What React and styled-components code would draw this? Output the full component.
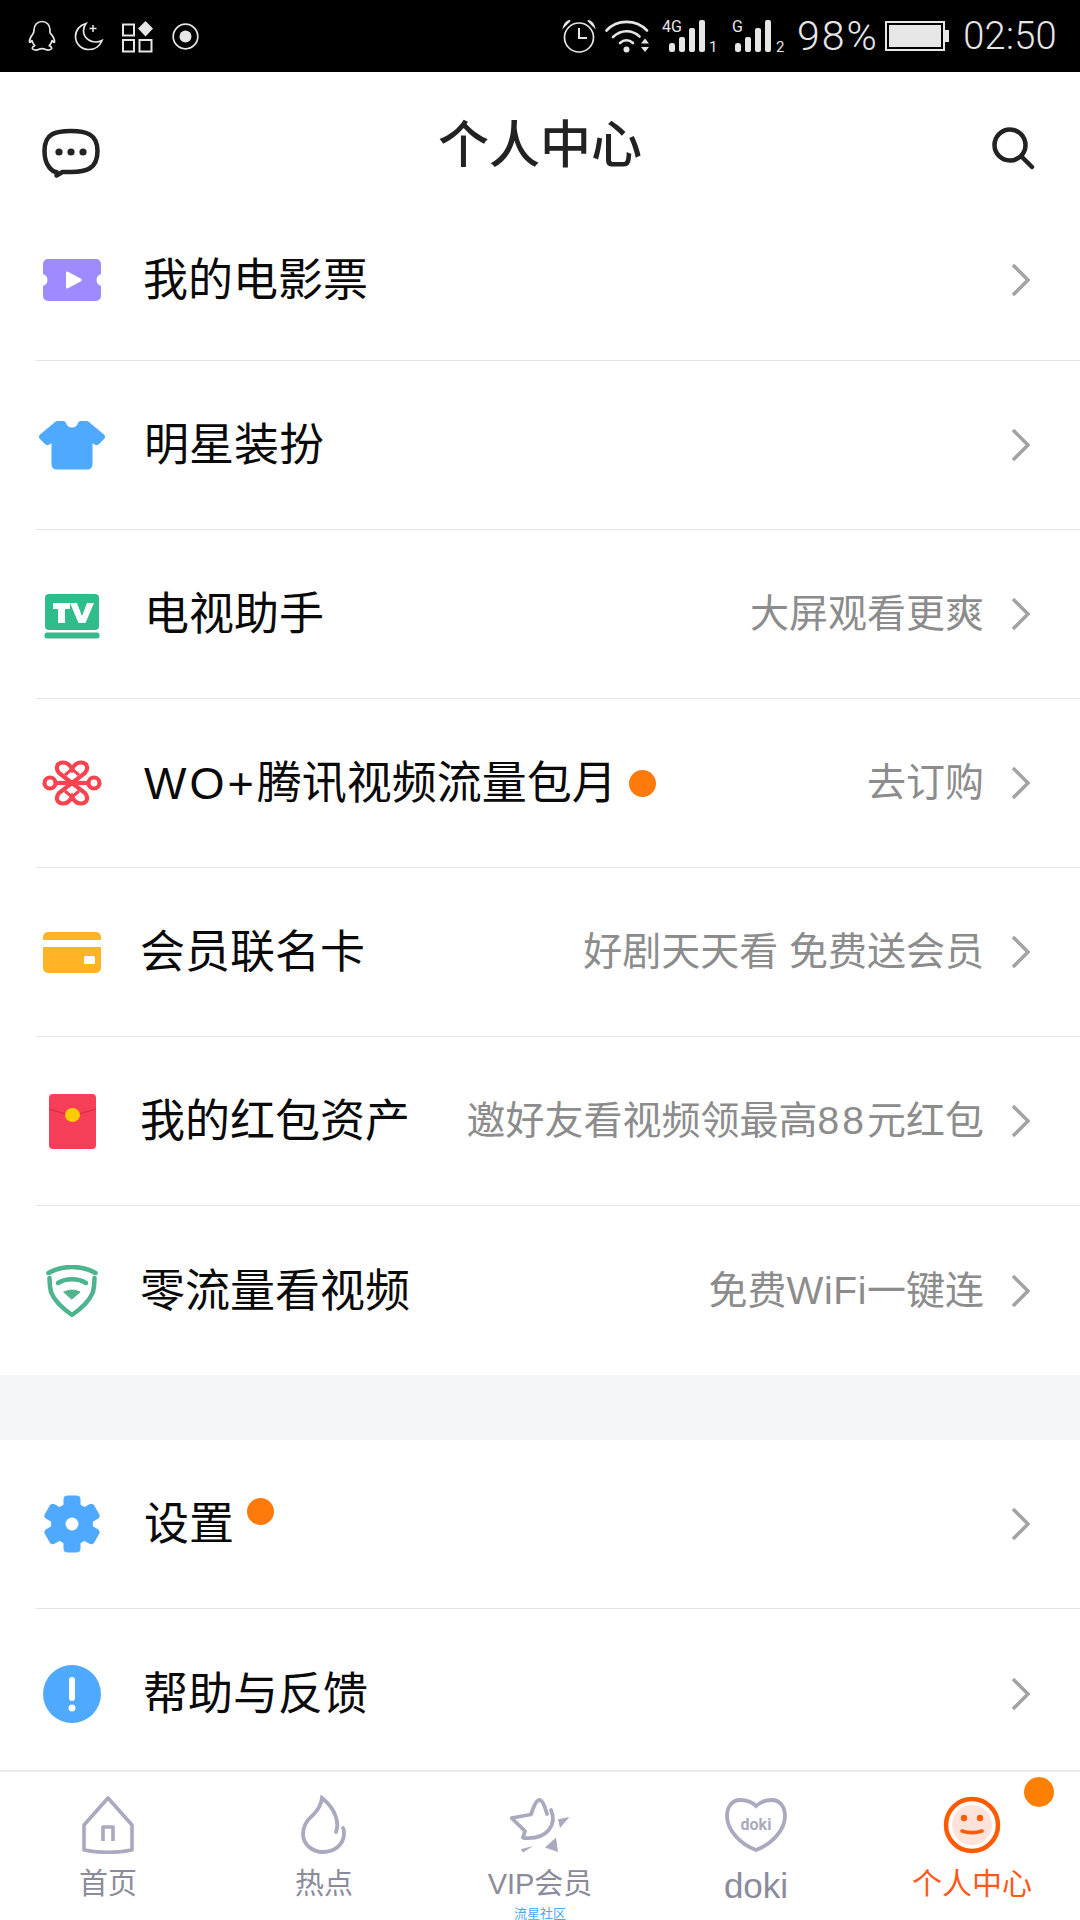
import React from 'react';
import styled, { createGlobalStyle } from 'styled-components';

const GlobalStyle = createGlobalStyle`
  html, body {
    margin: 0;
    padding: 0;
    background: #fff;
  }
  * {
    box-sizing: border-box;
  }
`;

const Page = styled.div`
  width: 1080px;
  height: 1920px;
  display: flex;
  flex-direction: column;
  overflow: hidden;
  background: #fff;
  font-family: "Liberation Sans", "Noto Sans CJK SC", sans-serif;
`;

// 状态栏
const StatusBar = styled.div`
  flex: none;
  height: 72px;
  background: #000;
  color: #e6e6e6;
  display: flex;
  align-items: center;
  justify-content: space-between;
  padding: 0 23px 0 28px;
`;

const StatusGroup = styled.div`
  display: flex;
  align-items: center;
  gap: ${(p) => p.$gap}px;
`;

const StatusSlot = styled.div`
  display: flex;
  margin-left: ${(p) => p.$left}px;
`;

const Percent = styled.span`
  font-family: Roboto, sans-serif;
  font-size: 41px;
  font-weight: 300;
  line-height: 72px;
  letter-spacing: 2px;
  margin-left: 3px;
  margin-right: -2.5px;
`;

const Clock = styled.span`
  font-family: Roboto, sans-serif;
  font-size: 38px;
  font-weight: 300;
  line-height: 72px;
  letter-spacing: 0.3px;
  margin-left: 5px;
`;

// 顶部标题
const Header = styled.div`
  flex: none;
  height: 127px;
  display: grid;
  grid-template-columns: 1fr auto 1fr;
  align-items: center;
  padding: 20px 42px 0 42px;
`;

const HeaderAction = styled.div`
  display: flex;
  justify-content: ${(p) => (p.$end ? 'flex-end' : 'flex-start')};
  margin-top: ${(p) => p.$top}px;
`;

const Title = styled.h1`
  margin: 0;
  font-size: 51px;
  font-weight: 500;
  color: #222;
  line-height: 60px;
`;

const Main = styled.div`
  flex: 1;
  min-height: 0;
  overflow: hidden;
`;

const Row = styled.div`
  height: ${(p) => (p.$first ? 162 : 169)}px;
  margin-left: 36px;
  padding-right: 50px;
  display: flex;
  align-items: center;
  border-bottom: ${(p) => (p.$last ? 'none' : '1px solid #e4e4e4')};
`;

const IconSlot = styled.div`
  flex: none;
  width: 72px;
  margin-right: 35px;
  margin-top: ${(p) => p.$shift || 0}px;
  display: flex;
  align-items: center;
  justify-content: center;
`;

const RowLabel = styled.span`
  font-size: 45px;
  line-height: 60px;
  color: #0a0a0a;
  margin-left: ${(p) => p.$nudge || 0}px;
  margin-top: 2px;
  white-space: nowrap;
`;

const LatinPart = styled.span`
  letter-spacing: ${(p) => p.$spacing}px;
`;

const Dot = styled.span`
  flex: none;
  width: 27px;
  height: 27px;
  border-radius: 50%;
  background: #ff7a0a;
  margin-left: ${(p) => p.$gap}px;
  margin-bottom: ${(p) => p.$lift || 0}px;
`;

const Spacer = styled.span`
  flex: 1;
`;

const RowHint = styled.span`
  font-size: 39px;
  line-height: 60px;
  color: #8c8c8c;
  white-space: nowrap;
`;

const Chevron = styled.svg`
  flex: none;
  margin-left: 26px;
`;

const SectionGap = styled.div`
  height: 65px;
  background: #f4f5f7;
`;

// 底部导航
const TabBar = styled.div`
  flex: none;
  height: 150px;
  border-top: 2px solid #ebebeb;
  background: #fff;
  display: grid;
  grid-template-columns: repeat(5, 1fr);
`;

const Tab = styled.div`
  display: flex;
  flex-direction: column;
  align-items: center;
  padding-top: 21px;
  position: relative;
`;

const TabIcon = styled.div`
  height: 64px;
  display: flex;
  align-items: center;
  justify-content: center;
`;

const TabLabel = styled.span`
  font-size: ${(p) => p.$size || 29}px;
  line-height: 36px;
  margin-top: ${(p) => p.$top || 9}px;
  color: ${(p) => (p.$active ? '#ff5a1c' : '#8b8b9c')};
  white-space: nowrap;
`;

const TabCaption = styled.span`
  position: absolute;
  left: 0;
  right: 0;
  bottom: 0;
  text-align: center;
  font-size: 13px;
  line-height: 13px;
  color: #4aa8ff;
`;

const TabBadge = styled.span`
  position: absolute;
  top: 5px;
  left: 160px;
  width: 30px;
  height: 30px;
  border-radius: 50%;
  background: #ff8000;
`;

const QQIcon = () => (
  <svg width="28" height="32" viewBox="0 0 28 32" fill="none" stroke="#e6e6e6" strokeWidth="1.7" strokeLinejoin="round">
    <path d="M14 1.5c-5 0-8 3.800-8 8.500 0 2-.3 3-1.500 4.600C2.600 17.200 1 20 1.600 22.300c.8 0 1.600-.7 2.400-1.700.5 2 1.300 3.700 2.700 5-1.600.7-2.700 1.600-2.300 3 .5 1.600 4.200 1.800 6 .9 1.200-.6 2.200-.9 3.600-.9s2.400.3 3.600.9c1.800.9 5.500.7 6-.9.4-1.400-.7-2.300-2.300-3 1.400-1.300 2.200-3 2.700-5 .8 1 1.600 1.700 2.400 1.700.6-2.300-1-5.100-2.900-7.700C21.300 13 22 12 22 10c0-4.700-3-8.500-8-8.500z" />
  </svg>
);

const MoonIcon = () => (
  <svg width="30" height="30" viewBox="0 0 30 30" fill="none" stroke="#e6e6e6" strokeWidth="1.7">
    <path d="M12 2.500C6 4 1.500 9 1.500 15.500 1.500 23 7.500 28.500 15 28.500c6 0 11-3.700 13-9-2 1-3.800 1.500-6 1.500-7.500 0-12.500-5-12.500-11.500 0-2.500 1-5 2.500-7z" />
    <path d="M19 4v7M15.500 7.500h7" strokeWidth="1.500" />
  </svg>
);

const AppsIcon = () => (
  <svg width="32" height="33" viewBox="0 0 32 33" fill="none" stroke="#e6e6e6" strokeWidth="2">
    <rect x="1" y="4.500" width="11" height="11" />
    <rect x="1" y="20" width="11" height="11.500" />
    <rect x="17.500" y="20" width="12" height="11.500" />
    <path d="M23.500 1L31 8.500 23.500 16.500 16 8.500z" fill="#e6e6e6" stroke="none" />
  </svg>
);

const RecordIcon = () => (
  <svg width="27" height="27" viewBox="0 0 27 27">
    <circle cx="13.500" cy="13.500" r="12.300" fill="none" stroke="#e6e6e6" strokeWidth="1.700" />
    <circle cx="13.500" cy="13.500" r="6" fill="#e6e6e6" />
  </svg>
);

const AlarmIcon = () => (
  <svg width="34" height="34" viewBox="0 0 34 34" fill="none" stroke="#e6e6e6" strokeWidth="1.700">
    <circle cx="17" cy="18.500" r="14.500" />
    <path d="M17 9v10h8" strokeWidth="2" />
    <path d="M2 7.500C3 4 5 2.500 8 1.500L2 7.500zM32 7.500C31 4 29 2.500 26 1.500l6 6z" fill="#e6e6e6" />
  </svg>
);

const WifiIcon = () => (
  <svg width="45" height="34" viewBox="0 0 45 34" fill="none" stroke="#e6e6e6" strokeWidth="2.600" strokeLinecap="round">
    <path d="M1.500 11.500C12 0 31 0 42 11.500" />
    <path d="M8 18c8-7.500 19-7.500 26.500-.5" />
    <path d="M15 24c4-3.500 9-3.500 13 0" />
    <circle cx="21.500" cy="30.500" r="3" fill="#e6e6e6" stroke="none" />
    <path d="M36 24.500h8l-4-5zM36 28h8l-4 5z" fill="#e6e6e6" stroke="none" />
  </svg>
);

const SignalIcon = ({ tag, sim, barX, simX, width }) => (
  <svg width={width} height="46" viewBox={`0 -7 ${width} 46`} fill="#e6e6e6">
    <text x="0" y="12" fontSize="16" fontFamily="Roboto, sans-serif">{tag}</text>
    <rect x={barX} y="23" width="6" height="9" rx="2.500" />
    <rect x={barX + 10} y="17" width="6" height="15" rx="2" />
    <rect x={barX + 20} y="8" width="6" height="24" rx="2" />
    <rect x={barX + 30} y="0" width="6" height="32" rx="2" />
    <text x={simX} y="32" fontSize="15" fontFamily="Roboto, sans-serif">{sim}</text>
  </svg>
);

const BatteryIcon = () => (
  <svg width="64" height="30" viewBox="0 0 64 30">
    <rect x="1" y="1" width="58" height="28" fill="none" stroke="#e6e6e6" strokeWidth="2" />
    <rect x="4" y="4" width="52" height="22" fill="#e6e6e6" />
    <rect x="60" y="9" width="4" height="12" fill="#e6e6e6" />
  </svg>
);

const MessageIcon = () => (
  <svg width="58" height="50" viewBox="0 0 58 50" fill="none">
    <path d="M29 3C14 3 2.500 5 2.500 23c0 16 9 21 12 21v3.500l6-3.500H29c15 0 26.500-3 26.500-21C55.500 6 44 3 29 3z" stroke="#222" strokeWidth="4.500" strokeLinejoin="round" />
    <path d="M15 43.500v4.500l6-3.500z" fill="#222" />
    <circle cx="17" cy="24" r="3.600" fill="#222" />
    <circle cx="29" cy="24" r="3.600" fill="#222" />
    <circle cx="41" cy="24" r="3.600" fill="#222" />
  </svg>
);

const SearchIcon = () => (
  <svg width="47" height="44" viewBox="0 0 47 44" fill="none" stroke="#222" strokeWidth="4.500" strokeLinecap="round">
    <circle cx="19" cy="19" r="15.500" />
    <path d="M31 31l10 10" />
  </svg>
);

const TicketIcon = () => (
  <svg width="58" height="42" viewBox="0 0 58 42">
    <path d="M5 0h48a5 5 0 0 1 5 5v10c-3 1-4.500 3-4.500 6s1.500 5 4.500 6v10a5 5 0 0 1-5 5H5a5 5 0 0 1-5-5V27c3-1 4.500-3 4.500-6S3 16 0 15V5a5 5 0 0 1 5-5z" fill="#9f8aff" />
    <path d="M23 14c0-1.200 1-2 2-1.300l13 7c1 .6 1 2 0 2.600l-13 7c-1 .7-2-.1-2-1.300z" fill="#fff" />
  </svg>
);

const ShirtIcon = () => (
  <svg width="68" height="50" viewBox="0 0 68 50">
    <path d="M20 1h5c2 0 2.500 1 3 2 1 3 3 4.500 6 4.500s5-1.500 6-4.500c.5-1 1-2 3-2h5c1.500 0 2.500.5 3.500 1.500L66 14.500c1.500 1.500 1.500 3 0 4.500l-5 5c-1.500 1.500-3 1.500-4.500.5L54.500 23v21c0 3.500-2 5.500-5.500 5.500H19c-3.500 0-5.500-2-5.500-5.500V23l-2 1.500c-1.500 1-3 1-4.500-.5l-5-5c-1.500-1.500-1.500-3 0-4.500L16.500 2.500C17.500 1.500 18.500 1 20 1z" fill="#4fa9ff" />
  </svg>
);

const TvIcon = () => (
  <svg width="56" height="45" viewBox="0 0 56 45">
    <rect x="1" y="0" width="54" height="36" rx="4" fill="#2fbd8b" />
    <rect x="0.500" y="38.500" width="55" height="6" rx="2.500" fill="#2fbd8b" />
    <path d="M9 9h17v6h-5v14h-7V15H9zM26 9h7l5 13 5-13h7l-8.500 20h-7z" fill="#fff" />
  </svg>
);

const KnotIcon = () => (
  <svg width="60" height="46" viewBox="0 0 60 46" fill="none" stroke="#f9444f" strokeWidth="4.200">
    <circle cx="8" cy="23" r="5.500" />
    <circle cx="52" cy="23" r="5.500" />
    <path d="M14 23h32" />
    <path d="M17 13c-4-5-2-10.500 4-10.500 4 0 7 2.500 9 6.500 2-4 5-6.500 9-6.500 6 0 8 5.500 4 10.500L17 33c-4 5-2 10.500 4 10.500 4 0 7-2.500 9-6.500 2 4 5 6.500 9 6.500 6 0 8-5.500 4-10.500z" />
    <path d="M30 9l7 6M30 9l-7 6M30 37l7-6M30 37l-7-6" strokeWidth="3" />
  </svg>
);

const CardIcon = () => (
  <svg width="58" height="41" viewBox="0 0 58 41">
    <path d="M5 0h48a5 5 0 0 1 5 5v3H0V5a5 5 0 0 1 5-5z" fill="#ffb426" />
    <path d="M0 15h58v21a5 5 0 0 1-5 5H5a5 5 0 0 1-5-5z" fill="#ffb426" />
    <rect x="41" y="24" width="11" height="8" rx="1.500" fill="#fff" />
  </svg>
);

const RedPacketIcon = () => (
  <svg width="47" height="55" viewBox="0 0 47 55">
    <rect x="0" y="0" width="47" height="55" rx="4" fill="#f63e58" />
    <path d="M0 15l23.500 7L47 15" fill="none" stroke="#dc3049" strokeWidth="1.500" />
    <ellipse cx="23.500" cy="21" rx="7.500" ry="7" fill="#ffcb05" />
  </svg>
);

const ShieldIcon = () => (
  <svg width="52" height="52" viewBox="0 0 52 52" fill="none" stroke="#4eb48d" strokeLinecap="round">
    <path d="M2.500 8C16 0 36 0 49.500 8" strokeWidth="4.500" />
    <path d="M3.500 13c0 6 .5 10 1.500 14C8 35 16 43 26 50c10-7 18-15 21-23 1-4 1.500-8 1.500-14" strokeWidth="4.500" />
    <path d="M12 18c8-5 20-5 28 0" strokeWidth="4.500" />
    <path d="M18 27c5-2.500 11-2.500 16 0l-8 7z" fill="#4eb48d" strokeWidth="1" />
  </svg>
);

const GearIcon = () => (
  <svg width="56" height="58" viewBox="0 0 56 58" fill="#4fa9ff">
    <circle cx="28" cy="29" r="21" />
    {[0, 60, 120, 180, 240, 300].map((deg) => (
      <rect key={deg} x="19.500" y="0.500" width="17" height="20" rx="4" transform={`rotate(${deg} 28 29)`} />
    ))}
    <circle cx="28" cy="29" r="6.500" fill="#fff" />
  </svg>
);

const HelpIcon = () => (
  <svg width="58" height="58" viewBox="0 0 58 58">
    <circle cx="29" cy="29" r="29" fill="#4fa9ff" />
    <rect x="26" y="12" width="6" height="24" rx="3" fill="#fff" />
    <circle cx="29" cy="43" r="3.500" fill="#fff" />
  </svg>
);

const HomeTabIcon = () => (
  <svg width="52" height="58" viewBox="0 0 52 58" fill="none" stroke="#a9a9bf" strokeWidth="3.600" strokeLinejoin="round">
    <path d="M26 2L2 29v25c15 3 33 3 48 0V29z" />
    <path d="M21 45V31h10v14" />
  </svg>
);

const FlameTabIcon = () => (
  <svg width="48" height="60" viewBox="0 0 48 60" fill="none" stroke="#a9a9bf" strokeWidth="3.800" strokeLinecap="round">
    <path d="M36 37c3-8 1-22-14-34-1 8-4 12-9 17-6 5-10 11-10 19 0 10 9 18 20 18s21-7 21-19c0-2 0-4-1-5" />
  </svg>
);

const StarTabIcon = () => (
  <svg width="60" height="55" viewBox="0 0 60 55" fill="none" stroke="#a9a9bf" strokeWidth="3.800" strokeLinecap="round" strokeLinejoin="round">
    <path d="M13 39.500L15 33 1.500 20 21 16.500C24 7 27 2 29.500 2 32 2 34.500 7 37 16" />
    <path d="M41 12c6 14-3 30-27 28" />
    <path d="M48 21.300L59.500 19 50 30zM35 49.600L46 39.600 48 54zM10.700 51.300L23 48 13 54.500z" fill="#a9a9bf" stroke="none" />
  </svg>
);

const DokiTabIcon = () => (
  <svg width="62" height="54" viewBox="0 0 62 54">
    <path d="M31 8C26 3 20 2 15 2 7 2 2 9 2 18c0 14 13 28 29 34 16-6 29-20 29-34C60 9 55 2 47 2c-5 0-11 1-16 6z" fill="none" stroke="#a9a9bf" strokeWidth="3.800" />
    <text x="31" y="32" textAnchor="middle" fontSize="16" fontWeight="700" fontFamily="Roboto, sans-serif" fill="#a9a9bf">doki</text>
  </svg>
);

const FaceTabIcon = () => (
  <svg width="58" height="58" viewBox="0 0 58 58" fill="none">
    <circle cx="29" cy="29" r="26" stroke="#ff5a00" strokeWidth="4.500" />
    <circle cx="29" cy="29" r="20" fill="#ffe3da" />
    <circle cx="21" cy="22" r="3.200" fill="#ff5a00" />
    <circle cx="37" cy="22" r="3.200" fill="#ff5a00" />
    <path d="M19 35c6 2 14 2 20 0" stroke="#ff5a00" strokeWidth="3.600" strokeLinecap="round" />
  </svg>
);

const menuTop = [
  { id: 'ticket', icon: <TicketIcon />, label: '我的电影票', nudge: 0, first: true },
  { id: 'dress', icon: <ShirtIcon />, label: '明星装扮', nudge: 1 },
  { id: 'tv', icon: <TvIcon />, label: '电视助手', hint: '大屏观看更爽', nudge: 1, shift: 5 },
  {
    id: 'wo',
    icon: <KnotIcon />,
    label: (
      <>
        <LatinPart $spacing={3}>WO+</LatinPart>腾讯视频流量包月
      </>
    ),
    hint: '去订购',
    nudge: 1,
    dot: 12,
  },
  { id: 'card', icon: <CardIcon />, label: '会员联名卡', hint: '好剧天天看 免费送会员', nudge: -3 },
  {
    id: 'packet',
    icon: <RedPacketIcon />,
    label: '我的红包资产',
    hint: (
      <>
        邀好友看视频领最高<LatinPart $spacing={3}>88</LatinPart>元红包
      </>
    ),
    nudge: -3,
  },
  {
    id: 'wifi',
    icon: <ShieldIcon />,
    label: '零流量看视频',
    hint: (
      <>
        免费<LatinPart $spacing={0.6}>WiFi</LatinPart>一键连
      </>
    ),
    nudge: -3,
    last: true,
  },
];

const menuBottom = [
  { id: 'settings', icon: <GearIcon />, label: '设置', nudge: 1, dot: 13, lift: 26 },
  { id: 'help', icon: <HelpIcon />, label: '帮助与反馈', nudge: 0, last: true },
];

const tabs = [
  { icon: <HomeTabIcon />, label: '首页' },
  { icon: <FlameTabIcon />, label: '热点' },
  { icon: <StarTabIcon />, label: 'VIP会员', caption: '流星社区' },
  { icon: <DokiTabIcon />, label: 'doki', size: 35, top: 11 },
  { icon: <FaceTabIcon />, label: '个人中心', active: true, size: 30, badge: true },
];

function MenuRow({ item }) {
  return (
    <Row $first={item.first} $last={item.last}>
      <IconSlot $shift={item.shift}>{item.icon}</IconSlot>
      <RowLabel $nudge={item.nudge}>{item.label}</RowLabel>
      {item.dot && <Dot $gap={item.dot} $lift={item.lift} />}
      <Spacer />
      {item.hint && <RowHint>{item.hint}</RowHint>}
      <Chevron width="20" height="34" viewBox="0 0 20 34" fill="none" stroke="#a3a3a3" strokeWidth="3.600">
        <path d="M3 2l15 15L3 32" />
      </Chevron>
    </Row>
  );
}

export default function App() {
  return (
    <Page>
      <GlobalStyle />
      <StatusBar>
        <StatusGroup $gap={18}>
          <QQIcon />
          <MoonIcon />
          <AppsIcon />
          <RecordIcon />
        </StatusGroup>
        <StatusGroup $gap={9}>
          <AlarmIcon />
          <WifiIcon />
          <StatusSlot $left={3}>
            <SignalIcon tag="4G" sim="1" barX={7} simX={47} width={55} />
          </StatusSlot>
          <StatusSlot $left={6}>
            <SignalIcon tag="G" sim="2" barX={3} simX={44} width={53} />
          </StatusSlot>
          <Percent>98%</Percent>
          <BatteryIcon />
          <Clock>02:50</Clock>
        </StatusGroup>
      </StatusBar>
      <Header>
        <HeaderAction $top={14}>
          <MessageIcon />
        </HeaderAction>
        <Title>个人中心</Title>
        <HeaderAction $end $top={4}>
          <SearchIcon />
        </HeaderAction>
      </Header>
      <Main>
        {menuTop.map((item) => (
          <MenuRow key={item.id} item={item} />
        ))}
        <SectionGap />
        {menuBottom.map((item) => (
          <MenuRow key={item.id} item={item} />
        ))}
      </Main>
      <TabBar>
        {tabs.map((tab) => (
          <Tab key={tab.label}>
            <TabIcon>{tab.icon}</TabIcon>
            <TabLabel $size={tab.size} $top={tab.top} $active={tab.active}>{tab.label}</TabLabel>
            {tab.caption && <TabCaption>{tab.caption}</TabCaption>}
            {tab.badge && <TabBadge />}
          </Tab>
        ))}
      </TabBar>
    </Page>
  );
}
